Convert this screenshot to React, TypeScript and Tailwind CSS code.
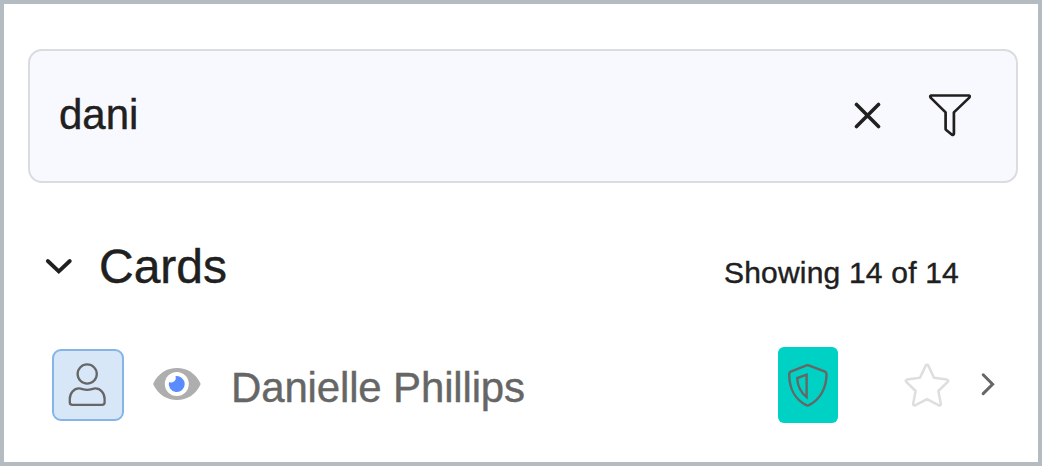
import { useState } from 'react';

interface Card {
  id: string;
  name: string;
}

const CARDS: Card[] = [{ id: 'danielle-phillips', name: 'Danielle Phillips' }];

function ClearIcon() {
  return (
    <svg width="28" height="28" viewBox="0 0 28 28" fill="none" stroke="currentColor" strokeWidth="3.6" strokeLinecap="round">
      <path d="M3.5 3.5 25.5 25.5M25.5 3.5 3.5 25.5" />
    </svg>
  );
}

function FunnelIcon() {
  return (
    <svg width="44" height="44" viewBox="0 0 44 44" fill="none" stroke="currentColor" strokeWidth="2.7" strokeLinejoin="round" strokeLinecap="round">
      <path d="M3.2 2.5H40.800Q42.400 2.800 41.300 4.600L25.900 19.400V40.600Q25.500 42.400 24 41.700L18.200 37Q17.600 36.600 17.600 36V19.400L2.600 4.600Q1.600 2.800 3.200 2.500Z" />
    </svg>
  );
}

function PersonIcon() {
  return (
    <svg width="40" height="46" viewBox="0 0 40 46" fill="none" stroke="currentColor" strokeWidth="2.3">
      <circle cx="19.2" cy="12" r="9.600" />
      <path d="M1.8 40V37C1.800 31 6 26.400 11 26.400C14 26.400 15.200 27.800 19.200 27.800C23.200 27.800 24.400 26.400 27.400 26.400C32.400 26.400 36.600 31 36.600 37V40.500Q36.600 42.800 34.100 42.800H4.300Q1.800 42.800 1.800 40.500Z" />
    </svg>
  );
}

function EyeIcon() {
  return (
    <svg width="48" height="32" viewBox="0 0 48 32">
      <path d="M.4 15.2C5.5 5 14 0 24 0S42.3 5 47.4 15.2Q47.7 16 47.4 16.8C42.3 27 34 32 24 32S5.5 27 .4 16.8Q0 16 .4 15.2Z" fill="#aeaeae" />
      <circle cx="23.8" cy="16" r="12" fill="#fff" />
      <path d="M22.4 8.2A8 8 0 1 1 16 14A4.6 4.6 0 0 0 22.4 8.2Z" fill="#5b8cff" />
    </svg>
  );
}

function ShieldIcon() {
  return (
    <svg width="40" height="44" viewBox="0 0 40 44" fill="none" stroke="currentColor" strokeWidth="2.4" strokeLinejoin="round">
      <path d="M20.6 2.3 37 8.6Q38.5 9.3 38.5 11.2C38.5 25 32.2 36.5 21 42.1Q19.6 42.8 18.2 42.1C7 36.5 1.2 25 1.2 11.2Q1.2 9.3 2.7 8.6L18.6 2.3Q19.6 1.9 20.6 2.3Z" />
      <path d="M18.6 11.7V34C13 29.8 9.6 23 9.2 15Z" strokeLinejoin="miter" />
    </svg>
  );
}

function StarIcon() {
  return (
    <svg width="46" height="44" viewBox="0 0 46 44" fill="none" stroke="#dedede" strokeWidth="2.5" strokeLinejoin="round">
      <path d="M21.7 2.600Q23 .8 24.3 2.600L30 14.800 43 16.600Q45 17.200 43.700 18.900L34.400 28 36.800 40.800Q36.800 43 34.900 42.300L23 36.200 11.100 42.300Q9.200 43 9.200 40.800L11.600 28 2.300 18.900Q1 17.200 3 16.600L16 14.800Z" />
    </svg>
  );
}

function SearchBar({ value, onChange }: { value: string; onChange: (value: string) => void }) {
  return (
    <div className="flex h-[134px] items-center rounded-[14px] border-2 border-[#dadce0] bg-[#f8f9fe] pr-[44px] pb-[2px] pl-[29px]">
      <input
        type="text"
        aria-label="Search"
        value={value}
        onChange={(e) => onChange(e.target.value)}
        className="h-[60px] min-w-0 flex-1 bg-transparent text-[42px] leading-[60px] outline-none"
      />
      <button type="button" aria-label="Clear" onClick={() => onChange('')}>
        <ClearIcon />
      </button>
      <button type="button" aria-label="Filter" className="ml-[47px]">
        <FunnelIcon />
      </button>
    </div>
  );
}

function CardRow({ card }: { card: Card }) {
  return (
    <li className="flex h-[76px] items-center pr-[20px] pl-[24px] text-[#666]">
      <div className="flex size-[72px] items-center justify-center rounded-[9px] border-2 border-[#84b4e8] bg-[#d8e7f8]">
        <PersonIcon />
      </div>
      <div className="mb-[2px] ml-[29px]">
        <EyeIcon />
      </div>
      <span className="mt-[5px] ml-[30px] flex-1 text-[42px] leading-[60px] tracking-[-0.15px]">{card.name}</span>
      <div className="flex h-[76px] w-[60px] items-center justify-center rounded-[6px] bg-[#00d1c5]">
        <ShieldIcon />
      </div>
      <button type="button" aria-label="Favorite" className="ml-[66px]">
        <StarIcon />
      </button>
      <svg className="mr-[22px] mb-[2px] ml-[30px]" width="16" height="24" viewBox="0 0 16 24" fill="none" stroke="currentColor" strokeWidth="3" strokeLinecap="round">
        <path d="M3.2 2.8 12.6 12.2 3.2 21.6" />
      </svg>
    </li>
  );
}

export default function App() {
  const [query, setQuery] = useState('dani');

  return (
    <main className="h-[466px] w-[1042px] border-4 border-[#b4bcc2] bg-white pt-[45px] font-['Liberation_Sans',Arial,sans-serif] text-[#202020] [-webkit-text-stroke:0.4px]">
      <div className="pr-[20px] pl-[24px]">
        <SearchBar value={query} onChange={setQuery} />
      </div>

      <section>
        <div className="mt-[54px] flex h-[60px] items-center pr-[79px] pl-[41px]">
          <svg width="28" height="18" viewBox="0 0 28 18" fill="none" stroke="currentColor" strokeWidth="3.8" strokeLinecap="round">
            <path d="M2.8 3 13.8 13.4 24.8 3" />
          </svg>
          <h2 className="ml-[26px] flex-1 text-[48px] leading-[60px]">Cards</h2>
          <span className="mt-[11px] text-[30px] leading-[36px] tracking-[0.2px]">Showing 14 of 14</span>
        </div>

        <ul className="mt-[50px] pl-[24px]">
          {CARDS.map((card) => (
            <CardRow key={card.id} card={card} />
          ))}
        </ul>
      </section>
    </main>
  );
}
